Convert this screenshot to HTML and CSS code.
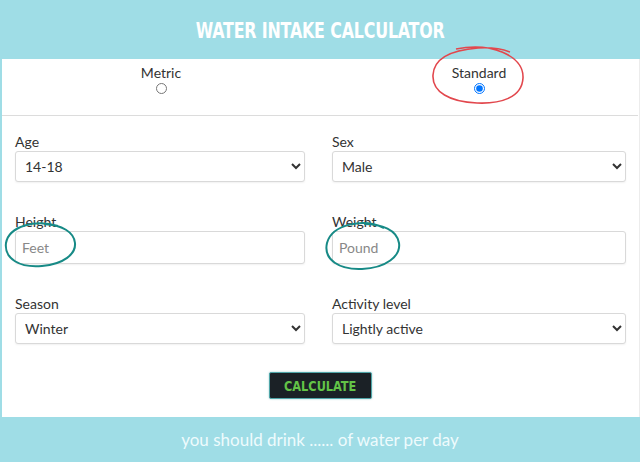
FILE: index.html
```html
<!DOCTYPE html>
<html>
<head>
<meta charset="utf-8">
<link rel="stylesheet" href="styles.css">
</head>
<body>
<div class="app">
  <header class="top"><h1 class="title">WATER INTAKE CALCULATOR</h1></header>
  <div class="units">
    <label class="unit"><span>Metric</span><input type="radio" name="u"></label>
    <label class="unit"><span>Standard</span><input type="radio" name="u" checked></label>
  </div>
  <div class="form">
    <div class="field"><label class="lbl">Age</label>
      <select class="ctl"><option>14-18</option></select></div>
    <div class="field"><label class="lbl">Sex</label>
      <select class="ctl"><option>Male</option></select></div>
    <div class="field"><label class="lbl">Height</label>
      <input class="ctl txt" placeholder="Feet"></div>
    <div class="field"><label class="lbl">Weight</label>
      <input class="ctl txt" placeholder="Pound"></div>
    <div class="field"><label class="lbl">Season</label>
      <select class="ctl"><option>Winter</option></select></div>
    <div class="field"><label class="lbl">Activity level</label>
      <select class="ctl"><option>Lightly active</option></select></div>
  </div>
  <div class="actions"><button class="calc"><span class="calc-text">CALCULATE</span></button></div>
  <footer class="result">you should drink ...... of water per day</footer>
</div>
<svg class="marks" width="640" height="465" viewBox="0 0 640 465">
  <path d="M456 49 C490 42 524 55 523 78 C522 98 500 104 477 103 C450 102 432 92 433 75 C434 58 452 50 478 48 C492 47 502 49 510 52" fill="none" stroke="#e2474d" stroke-width="1.6"/>
  <path d="M58 226 C36 219 9 226 6 243 C4 259 20 268 42 266 C64 264 76 254 75 243 C74 232 62 225 44 224" fill="none" stroke="#178a86" stroke-width="2"/>
  <path d="M384 228 C364 218 332 224 327 243 C323 260 340 270 362 269 C386 268 401 256 399 243 C397 230 382 224 364 224" fill="none" stroke="#178a86" stroke-width="2"/>
</svg>
</body>
</html>
```
FILE: styles.css
```css
html, body { margin: 0; padding: 0; background: #fff; }
body { width: 640px; height: 465px; overflow: hidden; position: relative; font-family: Lato, "Liberation Sans", sans-serif; color: #333; }
.app { border-left: 2px solid #9fdde6; border-right: 1px solid #ececec; height: 462px; box-sizing: border-box; display: flex; flex-direction: column; }
.top { background: #9fdde6; height: 59px; display: flex; align-items: center; justify-content: center; margin-left: -2px; margin-right: -1px; }
.title { margin: 0; color: #fff; font-family: "DejaVu Sans Condensed", "DejaVu Sans", sans-serif; font-weight: bold; font-size: 21px; letter-spacing: -0.2px; transform: scaleX(0.84); padding-top: 2px; white-space: nowrap; }
.units { display: grid; grid-template-columns: 1fr 1fr; height: 57px; border-bottom: 1px solid #dcdcdc; box-sizing: border-box; margin-right: 1px; }
.unit { display: flex; flex-direction: column; align-items: center; padding-top: 5px; font-size: 14px; color: #333; }
.unit span { line-height: 17px; }
.unit input { margin: 2px 0 0 0; width: 11px; height: 11px; }
.form { display: grid; grid-template-columns: 290px 294px; column-gap: 27px; row-gap: 30px; padding: 16px 0 0 13px; }
.field { display: flex; flex-direction: column; }
.lbl { font-size: 14px; line-height: 19px; color: #333; }
.ctl { height: 31px; box-sizing: border-box; border: 1px solid #d9d9d9; border-radius: 3px; background: #fff; font-family: Lato, "Liberation Sans", sans-serif; font-size: 14px; color: #333; padding: 0 5px; box-shadow: 0 1px 2px rgba(0,0,0,0.06); }
.txt { height: 33px; padding: 0 6px; color: #333; }
.txt::placeholder { color: #888; }
.actions { display: flex; justify-content: center; padding-top: 28px; margin-left: -1px; }
.calc { width: 103px; height: 27px; background: #1b2126; color: #63c447; border: 1px solid #4fa5a8; border-radius: 2px; padding: 0; box-shadow: 0 0 2px rgba(79,165,168,0.6); display: flex; align-items: center; justify-content: center; }
.calc-text { display: inline-block; font-family: "DejaVu Sans Condensed", "DejaVu Sans", sans-serif; font-weight: bold; font-size: 14px; transform: scaleX(0.9); white-space: nowrap; }
.result { margin-top: auto; background: #9fdde6; height: 45px; display: flex; align-items: center; justify-content: center; color: #eefbfd; font-family: Lato, "Liberation Sans", sans-serif; font-size: 17px; margin-left: -2px; margin-right: -1px; }
.marks { position: absolute; left: 0; top: 0; pointer-events: none; }
```
